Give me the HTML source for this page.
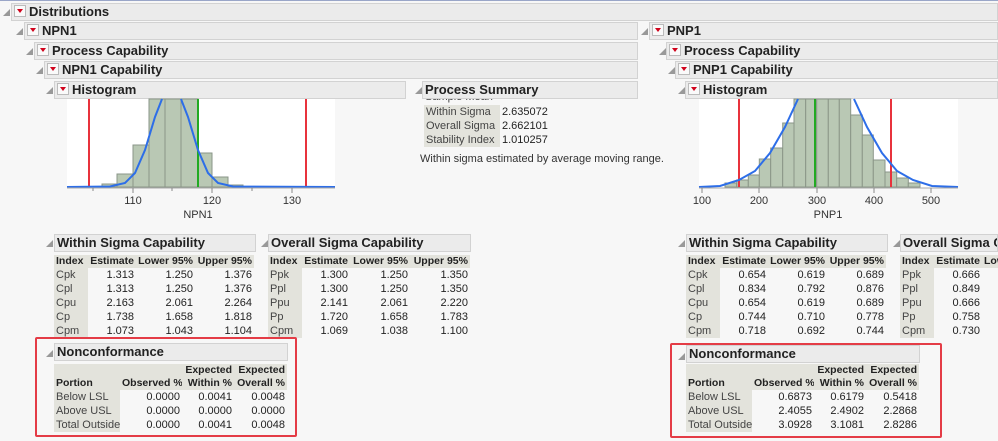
<!DOCTYPE html><html><head><meta charset="utf-8"><style>
body{margin:0;width:998px;height:441px;background:#f7f7f7;position:relative;overflow:hidden;font-family:"Liberation Sans",sans-serif;color:#222}
.a{position:absolute}
.h{position:absolute;background:#ebebeb;border:1px solid #d2d2d2;font-weight:bold;font-size:13px;line-height:16px;box-sizing:border-box;height:18px;padding-left:2px;white-space:nowrap;overflow:hidden}
.t{position:absolute;width:0;height:0;border-left:7px solid transparent;border-bottom:7px solid #999}
.b{display:inline-block;width:10px;height:10px;border:1px solid #bbb;background:#fafafa;vertical-align:-1px;margin-right:3px;position:relative}
.b:after{content:"";position:absolute;left:2px;top:3px;border-left:3px solid transparent;border-right:3px solid transparent;border-top:4px solid #d0021b}
table{position:absolute;border-collapse:collapse;font-size:11px;table-layout:fixed;white-space:nowrap}
td{padding:0 2px;height:14px;line-height:14px;text-align:right;overflow:hidden}
td:first-child{text-align:left;background:#e3e3dc;color:#444}
tr.hd td{background:#e3e3dc;font-weight:bold;color:#222;height:13px;line-height:13px;font-size:10.5px}
tr.hd2 td{background:#e3e3dc;font-weight:bold;color:#222;height:26px;line-height:13px;font-size:10.5px}
.red{position:absolute;border:2px solid #e43c46;border-radius:2px;box-sizing:border-box}
.clip{position:absolute;left:0;top:0;width:998px;height:441px;overflow:hidden}
</style></head><body><div class="clip">
<div class="a" style="left:0;top:0;width:998px;height:1px;background:#9aa6c8"></div>
<div class="t" style="left:3px;top:9px"></div><div class="h" style="left:11px;top:3px;width:987px"><span class="b"></span>Distributions</div>
<div class="t" style="left:16px;top:28px"></div><div class="h" style="left:24px;top:22px;width:614px"><span class="b"></span>NPN1</div>
<div class="t" style="left:26px;top:48px"></div><div class="h" style="left:34px;top:42px;width:604px"><span class="b"></span>Process Capability</div>
<div class="t" style="left:36px;top:67px"></div><div class="h" style="left:44px;top:61px;width:594px"><span class="b"></span>NPN1 Capability</div>
<div class="t" style="left:46px;top:87px"></div><div class="h" style="left:54px;top:81px;width:352px"><span class="b"></span>Histogram</div>
<div class="t" style="left:415px;top:87px"></div><div class="h" style="left:422px;top:81px;width:216px">Process Summary</div>

<div class="t" style="left:641px;top:28px"></div><div class="h" style="left:649px;top:22px;width:349px"><span class="b"></span>PNP1</div>
<div class="t" style="left:659px;top:48px"></div><div class="h" style="left:666px;top:42px;width:332px"><span class="b"></span>Process Capability</div>
<div class="t" style="left:668px;top:67px"></div><div class="h" style="left:675px;top:61px;width:323px"><span class="b"></span>PNP1 Capability</div>
<div class="t" style="left:678px;top:87px"></div><div class="h" style="left:685px;top:81px;width:313px"><span class="b"></span>Histogram</div>

<svg class="a" style="left:0;top:0" width="998" height="230">
<rect x="67" y="99" width="268" height="89" fill="#fff"/>
<g fill="#b9c8b4" stroke="#8a9688" stroke-width="1">
<rect x="102" y="184" width="15" height="3"/><rect x="117" y="174" width="16" height="13"/><rect x="133" y="145" width="16" height="42"/>
<rect x="149" y="99" width="16" height="88"/><rect x="165" y="99" width="16" height="88"/><rect x="181" y="99" width="17" height="88"/>
<rect x="198" y="153" width="14" height="34"/><rect x="212" y="177" width="16" height="10"/><rect x="228" y="185" width="15" height="2"/>
</g>
<line x1="89" y1="99" x2="89" y2="187" stroke="#e8323c" stroke-width="2"/>
<line x1="306" y1="99" x2="306" y2="187" stroke="#e8323c" stroke-width="2"/>
<line x1="198" y1="99" x2="198" y2="187" stroke="#22aa22" stroke-width="2"/>
<path d="M67 187 L110 186.5 L125 183 L135 173 L145 150 L155 117 L162 99 M181 99 L188 117 L198 150 L208 173 L218 183 L233 186.5 L335 187" fill="none" stroke="#2d6ee8" stroke-width="2"/>
<line x1="67" y1="188" x2="335" y2="188" stroke="#aaa"/>
<g stroke="#888"><line x1="133" y1="188" x2="133" y2="193"/><line x1="212" y1="188" x2="212" y2="193"/><line x1="292" y1="188" x2="292" y2="193"/><line x1="93" y1="188" x2="93" y2="191"/><line x1="172" y1="188" x2="172" y2="191"/><line x1="252" y1="188" x2="252" y2="191"/></g>
<g font-family="Liberation Sans" font-size="11" fill="#333" text-anchor="middle"><text x="133" y="204">110</text><text x="212" y="204">120</text><text x="292" y="204">130</text><text x="198" y="218">NPN1</text></g>

<rect x="699" y="99" width="259" height="89" fill="#fff"/>
<g fill="#b9c8b4" stroke="#8a9688" stroke-width="1">
<rect x="725" y="183" width="11.7" height="4"/><rect x="736.7" y="180" width="11.6" height="7"/><rect x="748.3" y="175" width="11" height="12"/>
<rect x="759.3" y="159" width="11.4" height="28"/><rect x="770.7" y="148" width="12" height="39"/><rect x="782.7" y="123" width="11.3" height="64"/>
<rect x="794" y="99" width="11.7" height="88"/><rect x="805.7" y="99" width="11" height="88"/><rect x="816.7" y="99" width="11.6" height="88"/>
<rect x="828.3" y="99" width="11" height="88"/><rect x="839.3" y="99" width="11.4" height="88"/><rect x="850.7" y="115" width="11.6" height="72"/>
<rect x="862.3" y="135" width="11" height="52"/><rect x="873.3" y="160" width="11.7" height="27"/><rect x="885" y="172" width="11.7" height="15"/>
<rect x="896.7" y="178" width="11.6" height="9"/><rect x="908.3" y="183" width="11.7" height="4"/>
</g>
<line x1="739" y1="99" x2="739" y2="187" stroke="#e8323c" stroke-width="2"/>
<line x1="891" y1="99" x2="891" y2="187" stroke="#e8323c" stroke-width="2"/>
<line x1="815" y1="99" x2="815" y2="187" stroke="#22aa22" stroke-width="2"/>
<path d="M699 187 L720 186 L739 180 L755 171 L770 153 L785 127 L798 99 M854 99 L867 127 L882 153 L897 171 L913 180 L932 186 L958 187" fill="none" stroke="#2d6ee8" stroke-width="2"/>
<line x1="699" y1="188" x2="958" y2="188" stroke="#aaa"/>
<g stroke="#888"><line x1="702" y1="188" x2="702" y2="193"/><line x1="759" y1="188" x2="759" y2="193"/><line x1="817" y1="188" x2="817" y2="193"/><line x1="874" y1="188" x2="874" y2="193"/><line x1="931" y1="188" x2="931" y2="193"/></g>
<g font-family="Liberation Sans" font-size="11" fill="#333" text-anchor="middle"><text x="702" y="204">100</text><text x="759" y="204">200</text><text x="817" y="204">300</text><text x="874" y="204">400</text><text x="931" y="204">500</text><text x="828" y="218">PNP1</text></g>
</svg>

<div class="a" style="left:425px;top:99px;width:100px;height:5px;overflow:hidden"><div style="margin-top:-8px;font-size:11px;color:#444">Sample Mean &nbsp;114.7926</div></div>
<table style="left:424px;top:105px;width:136px"><col style="width:76px"><col style="width:60px"><tr><td>Within Sigma</td><td style="text-align:left">2.635072</td></tr><tr><td>Overall Sigma</td><td style="text-align:left">2.662101</td></tr><tr><td>Stability Index</td><td style="text-align:left">1.010257</td></tr></table>
<div class="a" style="left:420px;top:153px;font-size:11px;color:#333">Within sigma estimated by average moving range.</div>

<div class="t" style="left:46px;top:240px"></div><div class="h" style="left:54px;top:234px;width:202px">Within Sigma Capability</div>
<table style="left:54px;top:255px;width:200px"><col style="width:34px"><col style="width:48px"><col style="width:59px"><col style="width:59px"><tr class="hd"><td>Index</td><td>Estimate</td><td>Lower 95%</td><td>Upper 95%</td></tr>
<tr><td>Cpk</td><td>1.313</td><td>1.250</td><td>1.376</td></tr><tr><td>Cpl</td><td>1.313</td><td>1.250</td><td>1.376</td></tr><tr><td>Cpu</td><td>2.163</td><td>2.061</td><td>2.264</td></tr><tr><td>Cp</td><td>1.738</td><td>1.658</td><td>1.818</td></tr><tr><td>Cpm</td><td>1.073</td><td>1.043</td><td>1.104</td></tr></table>
<div class="t" style="left:261px;top:240px"></div><div class="h" style="left:268px;top:234px;width:203px">Overall Sigma Capability</div>
<table style="left:268px;top:255px;width:202px"><col style="width:34px"><col style="width:48px"><col style="width:60px"><col style="width:60px"><tr class="hd"><td>Index</td><td>Estimate</td><td>Lower 95%</td><td>Upper 95%</td></tr>
<tr><td>Ppk</td><td>1.300</td><td>1.250</td><td>1.350</td></tr><tr><td>Ppl</td><td>1.300</td><td>1.250</td><td>1.350</td></tr><tr><td>Ppu</td><td>2.141</td><td>2.061</td><td>2.220</td></tr><tr><td>Pp</td><td>1.720</td><td>1.658</td><td>1.783</td></tr><tr><td>Cpm</td><td>1.069</td><td>1.038</td><td>1.100</td></tr></table>

<div class="red" style="left:35px;top:337px;width:262px;height:100px"></div>
<div class="t" style="left:46px;top:350px"></div><div class="h" style="left:54px;top:343px;width:234px">Nonconformance</div>
<table style="left:54px;top:364px;width:233px"><col style="width:66px"><col style="width:62px"><col style="width:52px"><col style="width:53px"><tr class="hd2"><td style="vertical-align:bottom">Portion</td><td style="vertical-align:bottom">Observed %</td><td>Expected<br>Within %</td><td>Expected<br>Overall %</td></tr>
<tr><td>Below LSL</td><td>0.0000</td><td>0.0041</td><td>0.0048</td></tr><tr><td>Above USL</td><td>0.0000</td><td>0.0000</td><td>0.0000</td></tr><tr><td>Total Outside</td><td>0.0000</td><td>0.0041</td><td>0.0048</td></tr></table>

<div class="t" style="left:678px;top:240px"></div><div class="h" style="left:686px;top:234px;width:202px">Within Sigma Capability</div>
<table style="left:686px;top:255px;width:200px"><col style="width:34px"><col style="width:48px"><col style="width:59px"><col style="width:59px"><tr class="hd"><td>Index</td><td>Estimate</td><td>Lower 95%</td><td>Upper 95%</td></tr>
<tr><td>Cpk</td><td>0.654</td><td>0.619</td><td>0.689</td></tr><tr><td>Cpl</td><td>0.834</td><td>0.792</td><td>0.876</td></tr><tr><td>Cpu</td><td>0.654</td><td>0.619</td><td>0.689</td></tr><tr><td>Cp</td><td>0.744</td><td>0.710</td><td>0.778</td></tr><tr><td>Cpm</td><td>0.718</td><td>0.692</td><td>0.744</td></tr></table>
<div class="t" style="left:893px;top:240px"></div><div class="h" style="left:900px;top:234px;width:98px">Overall Sigma Capability</div>
<div class="a" style="left:900px;top:255px;width:98px;height:90px;overflow:hidden">
<table style="left:0;top:0;width:142px"><col style="width:34px"><col style="width:48px"><col style="width:60px"><tr class="hd"><td>Index</td><td>Estimate</td><td style="text-align:left">Lower 95%</td></tr>
<tr><td>Ppk</td><td>0.666</td><td></td></tr><tr><td>Ppl</td><td>0.849</td><td></td></tr><tr><td>Ppu</td><td>0.666</td><td></td></tr><tr><td>Pp</td><td>0.758</td><td></td></tr><tr><td>Cpm</td><td>0.730</td><td></td></tr></table></div>

<div class="red" style="left:670px;top:343px;width:272px;height:95px"></div>
<div class="t" style="left:678px;top:353px"></div><div class="h" style="left:686px;top:345px;width:234px">Nonconformance</div>
<table style="left:686px;top:364px;width:233px"><col style="width:66px"><col style="width:62px"><col style="width:52px"><col style="width:53px"><tr class="hd2"><td style="vertical-align:bottom">Portion</td><td style="vertical-align:bottom">Observed %</td><td>Expected<br>Within %</td><td>Expected<br>Overall %</td></tr>
<tr><td>Below LSL</td><td>0.6873</td><td>0.6179</td><td>0.5418</td></tr><tr><td>Above USL</td><td>2.4055</td><td>2.4902</td><td>2.2868</td></tr><tr><td>Total Outside</td><td>3.0928</td><td>3.1081</td><td>2.8286</td></tr></table>
</div></body></html>
